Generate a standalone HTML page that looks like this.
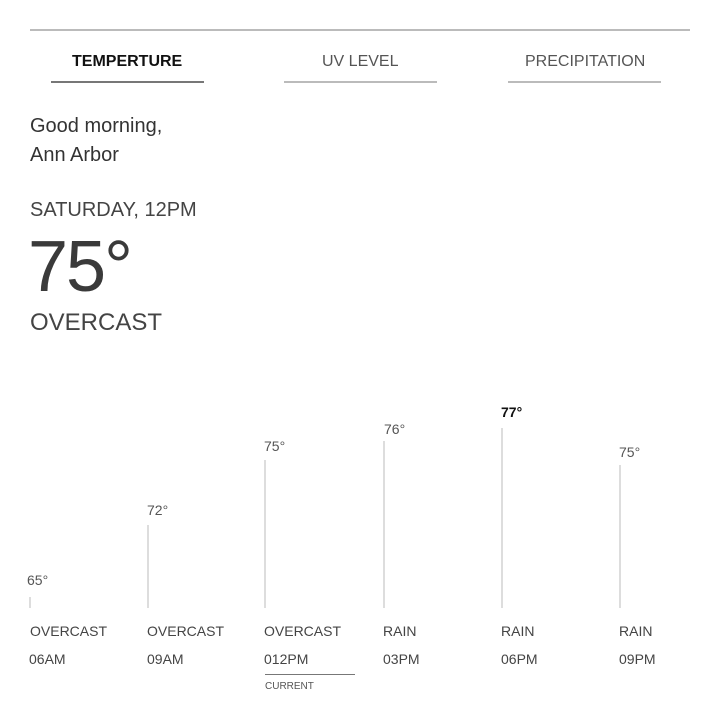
<!DOCTYPE html>
<html><head><meta charset="utf-8"><style>
*{margin:0;padding:0;box-sizing:border-box}
body{width:720px;height:720px;background:#fff;font-family:"Liberation Sans",sans-serif;color:#333;position:relative;overflow:hidden}
.a{position:absolute;white-space:nowrap;line-height:1}
.hl{position:absolute;height:2px}
.bar{position:absolute;width:2px;background:#ddd;bottom:112px}
.t{font-size:14px;color:#555}
.c{font-size:14px;color:#444}
</style></head><body>
<div class="hl" style="left:30px;top:29px;width:660px;background:#bbb"></div>
<div class="a" style="left:72px;top:54px;font-size:16px;font-weight:bold;color:#111">TEMPERTURE</div>
<div class="a" style="left:322px;top:54px;font-size:16px;color:#555">UV LEVEL</div>
<div class="a" style="left:525px;top:54px;font-size:16px;color:#555">PRECIPITATION</div>
<div class="hl" style="left:51px;top:81px;width:153px;background:#777"></div>
<div class="hl" style="left:284px;top:81px;width:153px;background:#bbb"></div>
<div class="hl" style="left:508px;top:81px;width:153px;background:#bbb"></div>
<div class="a" style="left:30px;top:112px;font-size:20px;line-height:29px;color:#333">Good morning,<br>Ann Arbor</div>
<div class="a" style="left:30px;top:200px;font-size:20px;color:#444">SATURDAY, 12PM</div>
<div class="a" style="left:28px;top:231px;font-size:72px;color:#3a3a3a;letter-spacing:-2px">75°</div>
<div class="a" style="left:30px;top:311px;font-size:24px;color:#444">OVERCAST</div>

<div class="bar" style="left:29px;top:597px"></div>
<div class="bar" style="left:147px;top:525px"></div>
<div class="bar" style="left:264px;top:460px"></div>
<div class="bar" style="left:383px;top:441px"></div>
<div class="bar" style="left:501px;top:428px"></div>
<div class="bar" style="left:619px;top:465px"></div>

<div class="a t" style="left:27px;top:573px">65°</div>
<div class="a t" style="left:147px;top:503px">72°</div>
<div class="a t" style="left:264px;top:439px">75°</div>
<div class="a t" style="left:384px;top:422px">76°</div>
<div class="a t" style="left:501px;top:405px;font-weight:bold;color:#111">77°</div>
<div class="a t" style="left:619px;top:445px">75°</div>

<div class="a c" style="left:30px;top:624px">OVERCAST</div>
<div class="a c" style="left:147px;top:624px">OVERCAST</div>
<div class="a c" style="left:264px;top:624px">OVERCAST</div>
<div class="a c" style="left:383px;top:624px">RAIN</div>
<div class="a c" style="left:501px;top:624px">RAIN</div>
<div class="a c" style="left:619px;top:624px">RAIN</div>

<div class="a c" style="left:29px;top:652px">06AM</div>
<div class="a c" style="left:147px;top:652px">09AM</div>
<div class="a c" style="left:264px;top:652px">012PM</div>
<div class="a c" style="left:383px;top:652px">03PM</div>
<div class="a c" style="left:501px;top:652px">06PM</div>
<div class="a c" style="left:619px;top:652px">09PM</div>

<div class="hl" style="left:265px;top:674px;width:90px;height:1px;background:#777"></div>
<div class="a" style="left:265px;top:682px;font-size:10px;color:#555">CURRENT</div>
</body></html>
